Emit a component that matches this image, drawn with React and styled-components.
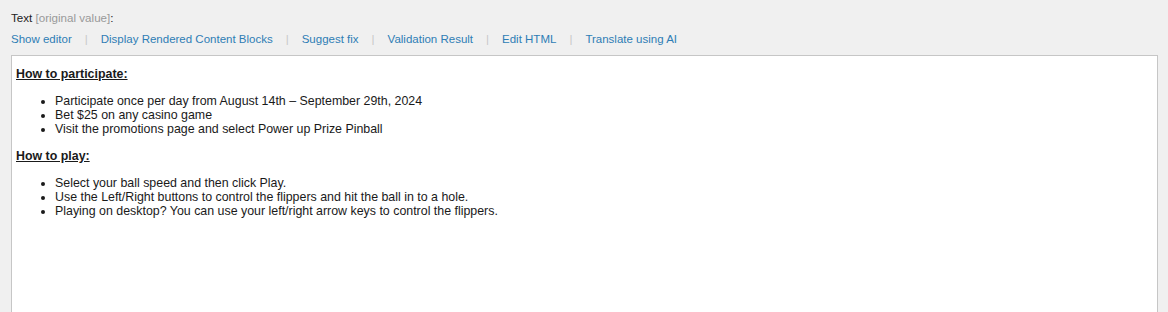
import { styled, createGlobalStyle } from "styled-components";

const Global = createGlobalStyle`
   html, body {
      margin: 0;
      padding: 0;
      background: #f0f0f0;
      font-family: "Liberation Sans", Arial, sans-serif;
      font-size: 12px;
      color: #222;
   }
`;

const Page = styled.div`
   padding: 11px 10px 0 11px;
`;

const Label = styled.div`
   line-height: 14px;
   font-size: 11.6px;
   color: #222;
`;

const Hint = styled.span`
   color: #999;
`;

const Toolbar = styled.div`
   display: flex;
   align-items: center;
   margin-top: 7px;
   line-height: 14px;
   font-size: 11.5px;
`;

const ToolLink = styled.a`
   color: #2e7db5;
   text-decoration: none;
   cursor: pointer;
`;

const Sep = styled.span`
   margin: 0 13px;
   color: #c8c8c8;
`;

const Editor = styled.div`
   margin-top: 9px;
   min-height: 300px;
   background: #fff;
   border: 1px solid #c6c6c6;
   padding: 11px 4px 10px;
   color: #1a1a1a;
   font-size: 12.4px;
   line-height: 14px;
`;

const Heading = styled.p`
   margin: 0 0 13px;
   font-weight: 700;
   text-decoration: underline;
`;

const List = styled.ul`
   margin: 0 0 13px;
   padding-left: 39px;
`;

const links = [
   "Show editor",
   "Display Rendered Content Blocks",
   "Suggest fix",
   "Validation Result",
   "Edit HTML",
   "Translate using AI",
];

const sections = [
   {
      title: "How to participate:",
      items: [
         "Participate once per day from August 14th \u2013 September 29th, 2024",
         "Bet $25 on any casino game",
         "Visit the promotions page and select Power up Prize Pinball",
      ],
   },
   {
      title: "How to play:",
      items: [
         "Select your ball speed and then click Play.",
         "Use the Left/Right buttons to control the flippers and hit the ball in to a hole.",
         "Playing on desktop? You can use your left/right arrow keys to control the flippers.",
      ],
   },
];

export default function App() {
   return (
      <>
         <Global />
         <Page>
            <Label>
               Text <Hint>[original value]</Hint>:
            </Label>
            <Toolbar>
               {links.map((l, i) => (
                  <span key={l}>
                     {i > 0 && <Sep>|</Sep>}
                     <ToolLink>{l}</ToolLink>
                  </span>
               ))}
            </Toolbar>
            <Editor>
               {sections.map((s) => (
                  <div key={s.title}>
                     <Heading>{s.title}</Heading>
                     <List>
                        {s.items.map((it) => (
                           <li key={it}>{it}</li>
                        ))}
                     </List>
                  </div>
               ))}
            </Editor>
         </Page>
      </>
   );
}
